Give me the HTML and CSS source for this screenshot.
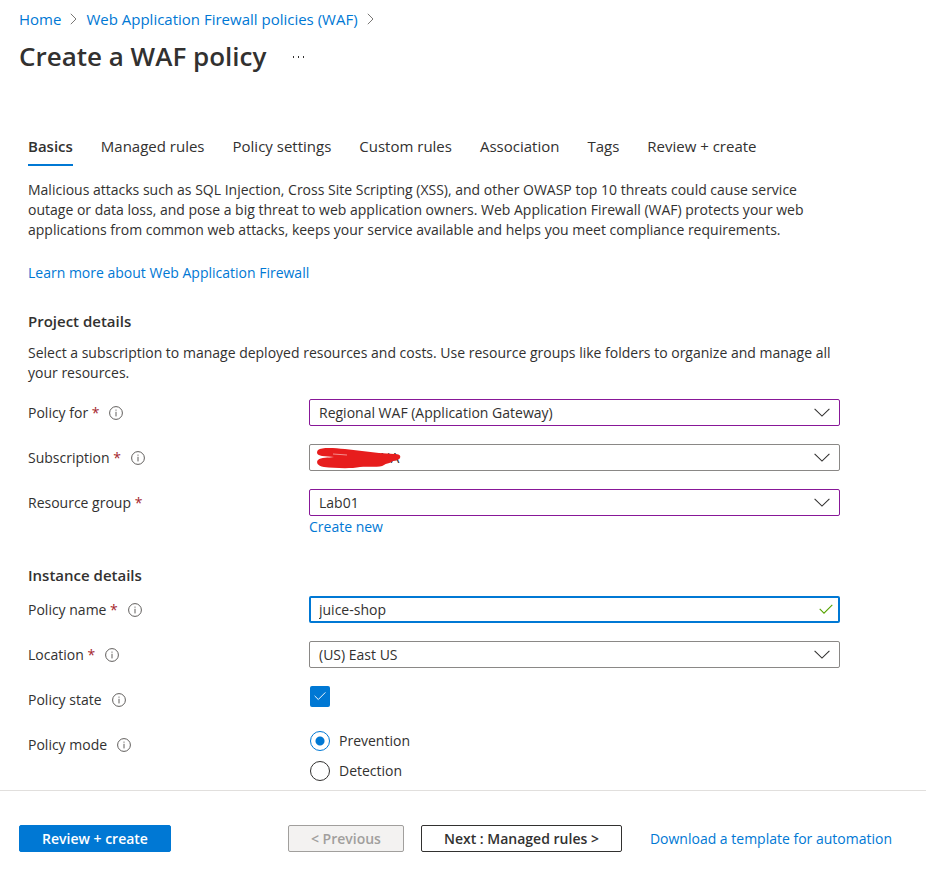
FILE: index.html
```html
<!DOCTYPE html>
<html lang="en">
<head>
<meta charset="utf-8">
<meta name="viewport" content="width=device-width, initial-scale=1">
<title>Create a WAF policy</title>
<link rel="stylesheet" href="styles.css">
</head>
<body>
<svg class="defs" aria-hidden="true">
  <symbol id="info" viewBox="0 0 14 14">
    <circle cx="7" cy="7" r="6.4" fill="none" stroke="currentColor"/>
    <path d="M7 5.8V10.4M7 3.6V4.7" fill="none" stroke="currentColor"/>
  </symbol>
  <symbol id="chevron-down" viewBox="0 0 16 9">
    <path d="M.6.8 8 8.1 15.4.8" fill="none" stroke="currentColor" stroke-width="1.1"/>
  </symbol>
  <symbol id="chevron-right" viewBox="0 0 7 12">
    <path d="M.8.8 6 6 .8 11.2" fill="none" stroke="currentColor"/>
  </symbol>
  <symbol id="check" viewBox="0 0 14 10">
    <path d="M.7 4.8 5 9.1 13.3.8" fill="none" stroke="currentColor" stroke-width="1.1"/>
  </symbol>
</svg>

<header class="page-header">
  <nav class="breadcrumb" aria-label="Breadcrumb">
    <a href="#">Home</a>
    <svg class="crumb-icon"><use href="#chevron-right"/></svg>
    <a href="#">Web Application Firewall policies (WAF)</a>
    <svg class="crumb-icon"><use href="#chevron-right"/></svg>
  </nav>
  <div class="title-row">
    <h1>Create a WAF policy</h1>
    <button type="button" class="more" aria-label="More actions">
      <svg viewBox="0 0 14 2" width="14" height="2"><path d="M1 0h1v2h-1zM6 0h1v2h-1zM11 0h1v2h-1z" fill="#323130"/></svg>
    </button>
  </div>
</header>

<main class="content">
  <nav class="tabs" aria-label="Steps">
    <a href="#" class="tab active" aria-current="step">Basics</a>
    <a href="#" class="tab">Managed rules</a>
    <a href="#" class="tab">Policy settings</a>
    <a href="#" class="tab">Custom rules</a>
    <a href="#" class="tab">Association</a>
    <a href="#" class="tab">Tags</a>
    <a href="#" class="tab">Review + create</a>
  </nav>

  <p class="text">Malicious attacks such as SQL Injection, Cross Site Scripting (XSS), and other OWASP top 10 threats could cause service outage or data loss, and pose a big threat to web application owners. Web Application Firewall (WAF) protects your web applications from common web attacks, keeps your service available and helps you meet compliance requirements.</p>
  <a href="#" class="learn">Learn more about Web Application Firewall</a>

  <form id="policy">
    <section class="section">
      <h2>Project details</h2>
      <p class="text">Select a subscription to manage deployed resources and costs. Use resource groups like folders to organize and manage all your resources.</p>
      <div class="fields">
        <div class="row">
          <div class="label"><label for="for">Policy for <span class="req">*</span></label><svg class="info"><use href="#info"/></svg></div>
          <div class="control">
            <select id="for" class="box edited"><option>Regional WAF (Application Gateway)</option></select>
            <svg class="arrow"><use href="#chevron-down"/></svg>
          </div>
        </div>
        <div class="row">
          <div class="label"><label for="sub">Subscription <span class="req">*</span></label><svg class="info"><use href="#info"/></svg></div>
          <div class="control">
            <select id="sub" class="box masked"><option>NA</option></select>
            <svg class="scribble" viewBox="0 0 86 22" aria-hidden="true">
              <path d="M2 3C6 0 18 1 29 2L63 6 78 7C83 7 85 8 84 11C82 14 78 13 75 15C73 17 70 16 68 18C64 21 52 19 44 20C34 22 18 21 8 20C1 19 0 15 2 13C5 10 12 11 18 10L6 9C1 8 0 6 2 3Z" fill="#e71d1d"/>
              <path d="M17 7 31 8" stroke="#f58e8e" fill="none"/>
            </svg>
            <svg class="arrow"><use href="#chevron-down"/></svg>
          </div>
        </div>
        <div class="row">
          <div class="label"><label for="group">Resource group <span class="req">*</span></label></div>
          <div class="control">
            <select id="group" class="box edited"><option>Lab01</option></select>
            <svg class="arrow"><use href="#chevron-down"/></svg>
          </div>
        </div>
      </div>
      <a href="#" class="create-new">Create new</a>
    </section>

    <section class="section instance">
      <h2>Instance details</h2>
      <div class="fields">
        <div class="row">
          <div class="label"><label for="name">Policy name <span class="req">*</span></label><svg class="info"><use href="#info"/></svg></div>
          <div class="control">
            <input id="name" type="text" class="box focused" value="juice-shop">
            <svg class="valid"><use href="#check"/></svg>
          </div>
        </div>
        <div class="row">
          <div class="label"><label for="location">Location <span class="req">*</span></label><svg class="info"><use href="#info"/></svg></div>
          <div class="control">
            <select id="location" class="box"><option>(US) East US</option></select>
            <svg class="arrow"><use href="#chevron-down"/></svg>
          </div>
        </div>
        <div class="row">
          <div class="label"><label for="state">Policy state</label><svg class="info"><use href="#info"/></svg></div>
          <div class="control">
            <input id="state" type="checkbox" class="checkbox" checked>
            <svg class="tick"><use href="#check"/></svg>
          </div>
        </div>
        <div class="row">
          <div class="label"><span id="mode">Policy mode</span><svg class="info"><use href="#info"/></svg></div>
          <div class="radios" role="radiogroup" aria-labelledby="mode">
            <label class="radio"><input type="radio" name="mode" checked>Prevention</label>
            <label class="radio"><input type="radio" name="mode">Detection</label>
          </div>
        </div>
      </div>
    </section>
  </form>
</main>

<footer class="footer">
  <button type="submit" form="policy" class="btn primary">Review + create</button>
  <div class="steps">
    <button type="button" class="btn" disabled>&lt; Previous</button>
    <button type="button" class="btn">Next : Managed rules &gt;</button>
  </div>
  <a href="#">Download a template for automation</a>
</footer>
</body>
</html>
```
FILE: styles.css
```css
* { box-sizing: border-box; }

body {
  margin: 0;
  min-height: 100vh;
  display: flex;
  flex-direction: column;
  background: #fff;
  color: #323130;
  font: 14px/20px "Segoe UI", "Open Sans", "Noto Sans", sans-serif;
}

h1, h2, p { margin: 0; }
a { color: #0078d4; text-decoration: none; }
button, input, select { font: inherit; color: inherit; }
.defs { position: absolute; width: 0; height: 0; }

.page-header { padding: 9px 19px 0; }
.breadcrumb { display: flex; align-items: center; gap: 9px; font-size: 15px; }
.crumb-icon { width: 7px; height: 12px; color: #797775; }
.title-row { display: flex; align-items: center; gap: 26px; margin-top: 9px; }
h1 { font-size: 26px; line-height: 36px; font-weight: 600; }
.more { display: flex; border: 0; padding: 2px 0 0; background: none; }

.content { flex: 1; padding: 59px 86px 8px 28px; }
.tabs { display: flex; gap: 28px; margin-bottom: 14px; font-size: 15px; white-space: nowrap; }
.tab { padding: 3px 0 8px; color: inherit; border-bottom: 2px solid transparent; }
.tab.active { font-weight: 600; border-color: #0078d4; }
.learn { display: block; margin-top: 23px; }

.section { margin-top: 28px; }
h2 { font-size: 15px; line-height: 20px; font-weight: 600; margin-bottom: 12px; }
.instance h2 { margin-bottom: 11px; }
.fields { display: grid; gap: 18px; }
.text + .fields { margin-top: 16px; }
.row { display: grid; grid-template-columns: 281px 1fr; align-items: start; min-height: 27px; }
.label { display: flex; align-items: center; gap: 10px; min-height: 27px; }
.req { color: #a4262c; }
.info { width: 14px; height: 14px; color: #605e5c; }
.control { position: relative; display: flex; }
.box {
  appearance: none;
  width: 100%;
  height: 27px;
  padding: 0 9px;
  border: 1px solid #8a8886;
  border-radius: 2px;
  background: #fff;
  outline: 0;
}
.edited { border-color: #881798; }
.focused { border: 2px solid #0078d4; padding: 0 8px; }
.masked { padding-left: 70px; }
.arrow { position: absolute; right: 10px; top: 9px; width: 16px; height: 9px; pointer-events: none; }
.valid { position: absolute; right: 7px; top: 8px; width: 14px; height: 10px; color: #57a300; }
.scribble { position: absolute; left: 7px; top: 3px; width: 86px; height: 22px; pointer-events: none; }
.create-new { display: block; margin: 1px 0 0 281px; }

.checkbox { appearance: none; width: 20px; height: 21px; margin: 0 1px; border-radius: 2px; background: #0078d4; }
.tick { position: absolute; left: 5px; top: 5px; width: 12px; height: 10px; color: #fff; pointer-events: none; }
.radios { display: grid; gap: 10px; }
.radio { display: flex; align-items: center; gap: 9px; }
.radio input {
  appearance: none;
  width: 20px;
  height: 20px;
  margin: 0 0 0 1px;
  border: 1px solid #323130;
  border-radius: 50%;
}
.radio input:checked { border-color: #0078d4; background: radial-gradient(circle, #0078d4 4px, transparent 5px); }

.footer { display: flex; align-items: center; padding: 34px 19px 18px; border-top: 1px solid #e1dfdd; white-space: nowrap; }
.steps { display: flex; gap: 17px; margin: 0 28px 0 117px; }
.btn { height: 27px; padding: 0 22px; border: 1px solid #323130; border-radius: 2px; background: #fff; font-weight: 600; line-height: 20px; }
.btn.primary { border-color: #0078d4; background: #0078d4; color: #fff; }
.btn:disabled { border-color: #a19f9d; background: #f3f2f1; color: #a19f9d; }
```
